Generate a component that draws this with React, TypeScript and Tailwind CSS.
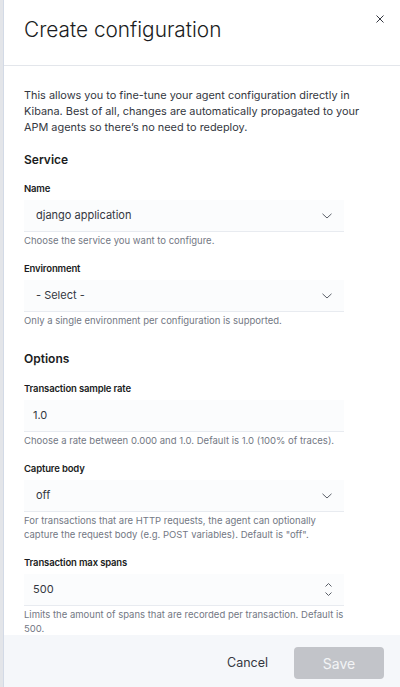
import React from "react";

const font = { fontFamily: "Inter, 'Noto Sans', sans-serif" };

function Chevron() {
  return (
    <svg width="10" height="6" viewBox="0 0 10 6" fill="none" className="shrink-0">
      <polyline points="0.5,0.8 5,5 9.5,0.8" stroke="#5a5f68" strokeWidth="1" />
    </svg>
  );
}

function Spinner() {
  return (
    <div className="flex flex-col items-center gap-[5px] shrink-0">
      <svg width="7" height="4" viewBox="0 0 7 4" fill="none">
        <polyline points="0.5,3.5 3.5,0.5 6.5,3.5" stroke="#5a5f68" strokeWidth="1" />
      </svg>
      <svg width="7" height="4" viewBox="0 0 7 4" fill="none">
        <polyline points="0.5,0.5 3.5,3.5 6.5,0.5" stroke="#5a5f68" strokeWidth="1" />
      </svg>
    </div>
  );
}

type FieldProps = {
  label: string;
  value: string;
  help: React.ReactNode;
  kind: "select" | "text" | "number";
  first?: boolean;
};

function Field({ label, value, help, kind, first }: FieldProps) {
  return (
    <div className={first ? "" : "mt-[14px]"}>
      <div className="text-[9.5px] leading-[14px] font-semibold tracking-[-0.15px] text-[#1a1c21]">{label}</div>
      <div
        className={`mt-1 h-[31px] w-[320px] bg-[#fbfcfd] shadow-[0_1px_0_0_#e8ebf0] flex items-center justify-between pr-[12px] ${
          kind === "select" ? "pl-[12px]" : "pl-[9px]"
        }`}
      >
        <span className="text-[11px] text-[#343741]">{value}</span>
        {kind === "select" && <Chevron />}
        {kind === "number" && <Spinner />}
      </div>
      <div className="mt-[3px] text-[9.5px] leading-[14px] text-[#737884] w-[320px]">{help}</div>
    </div>
  );
}

export default function App() {
  return (
    <div className="w-[400px] h-[687px] flex bg-white overflow-hidden" style={font}>
      {/* page edge behind the flyout */}
      <div className="w-[3px] bg-[#e3e5e9]" />
      <div className="flex-1 flex flex-col border-l border-[#d3dae6]">
        {/* Header */}
        <div className="h-[66px] shrink-0 border-b border-[#e3e6eb] flex items-start justify-between pl-[20px] pr-[16px]">
          <h1 className="mt-[16px] text-[20.8px] leading-[28px] font-light text-[#1a1c21]">
            Create configuration
          </h1>
          <button className="mt-[15px] p-0">
            <svg width="8" height="8" viewBox="0 0 8 8" fill="none">
              <path d="M0.5 0.5 L7.5 7.5 M7.5 0.5 L0.5 7.5" stroke="#343741" strokeWidth="1" />
            </svg>
          </button>
        </div>

        {/* Body */}
        <div className="flex-1 overflow-hidden pl-[20px] pr-[20px] pt-[21px]">
          <p className="text-[10.9px] leading-[16px] text-[#343741]">
            This allows you to fine-tune your agent configuration directly in Kibana. Best of all,
            changes are automatically propagated to your APM agents so there’s no need to
            redeploy.
          </p>

          <h2 className="mt-[17px] text-[12px] leading-[16px] font-semibold text-[#1a1c21]">Service</h2>
          <div className="mt-[14px]">
            <Field first label="Name" value="django application" kind="select" help="Choose the service you want to configure." />
            <Field label="Environment" value="- Select -" kind="select" help="Only a single environment per configuration is supported." />
          </div>

          <h2 className="mt-[23px] text-[12px] leading-[16px] font-semibold text-[#1a1c21]">Options</h2>
          <div className="mt-[15px]">
            <Field
              first
              label="Transaction sample rate"
              value="1.0"
              kind="text"
              help="Choose a rate between 0.000 and 1.0. Default is 1.0 (100% of traces)."
            />
            <Field
              label="Capture body"
              value="off"
              kind="select"
              help={'For transactions that are HTTP requests, the agent can optionally capture the request body (e.g. POST variables). Default is "off".'}
            />
            <Field
              label="Transaction max spans"
              value="500"
              kind="number"
              help="Limits the amount of spans that are recorded per transaction. Default is 500."
            />
          </div>
        </div>

        {/* Footer */}
        <div className="h-[52px] shrink-0 bg-[#f5f7fa] flex items-center justify-end gap-[26px] pr-[16px] pt-[4px]">
          <button className="text-[12.5px] text-[#343741]">Cancel</button>
          <button className="w-[90px] h-[32px] rounded-[4px] bg-[#c2c4c9] text-[14px] text-[#f3f4f6]">
            Save
          </button>
        </div>
      </div>
    </div>
  );
}
